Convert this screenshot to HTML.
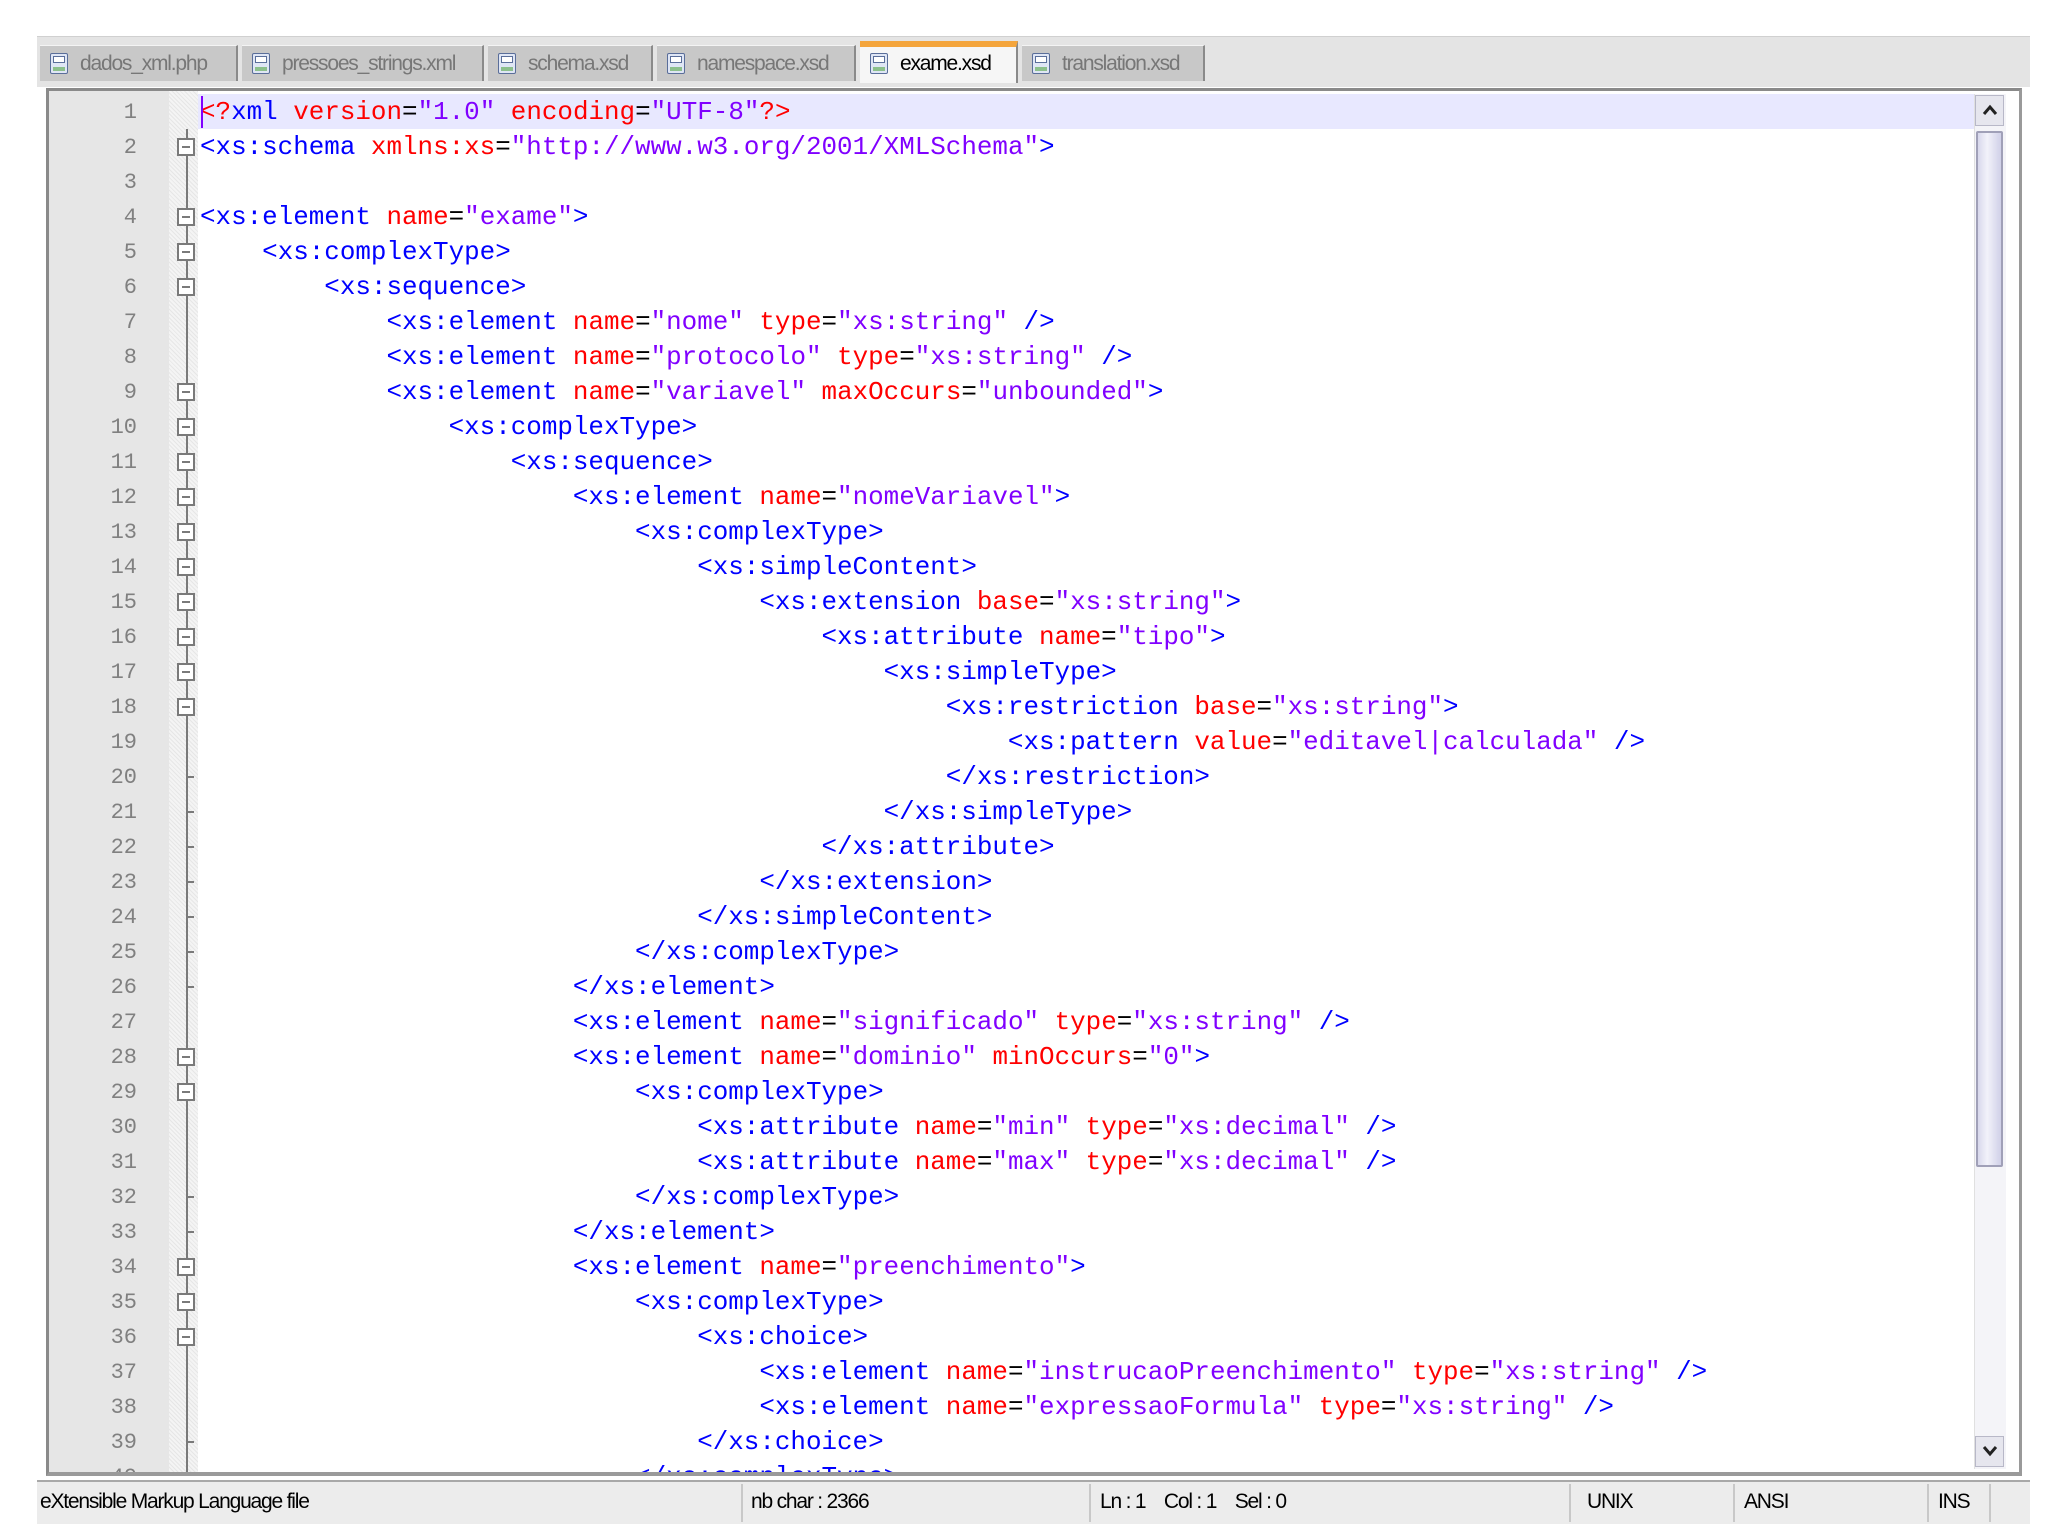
<!DOCTYPE html>
<html><head><meta charset="utf-8">
<style>
html,body{margin:0;padding:0;width:2048px;height:1535px;background:#fff;overflow:hidden;position:relative;font-family:"Liberation Sans",sans-serif}
.tabbar{position:absolute;left:37px;top:36px;width:1993px;height:50px;background:#e4e4e4;border-top:1px solid #d0d0d0}
.tab{position:absolute;top:8px;height:36px;background:#c8c8c8;border-right:2px solid #8a8a8a;border-top:1px solid #f4f4f4;font-size:21px;color:#777;letter-spacing:-1.2px;line-height:36px;white-space:nowrap;box-sizing:border-box;padding-left:40px}
.tab.act{background:#f6f6f6;color:#000;top:4px;height:42px;border-top:6px solid #f4a53c;line-height:34px}
.ico{position:absolute;left:10px;top:7px;width:18px;height:21px;border:1.5px solid #5a6e9a;border-radius:2px;background:#dfe6f5;box-sizing:border-box}
.ico:before{content:"";position:absolute;left:2px;right:2px;top:2px;height:5px;border:1px solid #5a6e9a;background:#fff}
.ico:after{content:"";position:absolute;left:2px;right:2px;bottom:2px;height:4px;background:#8cc08c}
.tab.act .ico{top:6px}
.frame{position:absolute;left:46px;top:88px;width:1976px;height:1388px;background:#fff;border-top:3px solid #8a8a8a;border-left:3px solid #8a8a8a;border-right:3px solid #9a9a9a;border-bottom:4px solid #9a9a9a;box-sizing:border-box;overflow:hidden}
.gut{position:absolute;left:0;top:0;width:120px;height:100%;background:#e6e6e6}
.fold{position:absolute;left:120px;top:0;width:29px;height:100%;background-color:#f4f4f4;background-image:repeating-linear-gradient(45deg,#e6e6e6 0 1px,transparent 1px 3px)}
.hl{position:absolute;left:149px;top:3px;width:1776px;height:35px;background:#e8e8ff}
.caret{position:absolute;left:152px;top:5px;width:2px;height:32px;background:#8000ff}
.nums{position:absolute;left:0;top:4px;width:88px;text-align:right;font-family:"Liberation Mono",monospace;font-size:22px;line-height:35px;color:#808080;white-space:pre;margin:0}
.code{position:absolute;left:151px;top:4px;font-family:"Liberation Mono",monospace;font-size:25.9px;line-height:35px;color:#000;white-space:pre;margin:0;letter-spacing:0}
.t{color:#0000ff}.a{color:#ff0000}.v{color:#8000ff}
.vl{position:absolute;left:137px;width:2px;background:#7a7a7a}
.fb{position:absolute;left:128px;width:18px;height:18px;border:2px solid #7a7a7a;background:#fff;box-sizing:border-box}
.fb:after{content:"";position:absolute;left:3px;right:3px;top:6px;height:2px;background:#7a7a7a}
.tk{position:absolute;left:137px;width:8px;height:2px;background:#7a7a7a}
.sb{position:absolute;left:1925px;top:3px;width:31px;height:1375px;background:#f4f4f8;border-left:1px solid #e0e0e0}
.sbbtn{position:absolute;left:1926px;width:29px;height:31px;background:#e6e6ee;border:1px solid #b8b8c8;box-sizing:border-box}
.sbbtn svg{position:absolute;left:6px;top:8px}
.thumb{position:absolute;left:1927px;top:40px;width:27px;height:1036px;background:linear-gradient(90deg,#d8d8ec,#f2f2fa 40%,#d0d0e8);border:2px solid #a0a0b8;box-sizing:border-box;border-radius:2px}
.status{position:absolute;left:37px;top:1480px;width:1993px;height:42px;background:#ececec;border-top:2px solid #a8a8a8;font-size:21px;letter-spacing:-1.2px;line-height:40px;color:#000}
.status span{position:absolute;top:0}
.sep{position:absolute;top:2px;width:2px;height:38px;background:#c8c8c8}
</style></head><body>
<div class="tabbar">
 <div class="tab" style="left:3px;width:198px"><span class="ico"></span>dados_xml.php</div>
 <div class="tab" style="left:205px;width:242px"><span class="ico"></span>pressoes_strings.xml</div>
 <div class="tab" style="left:451px;width:165px"><span class="ico"></span>schema.xsd</div>
 <div class="tab" style="left:620px;width:199px"><span class="ico"></span>namespace.xsd</div>
 <div class="tab act" style="left:823px;width:158px"><span class="ico"></span>exame.xsd</div>
 <div class="tab" style="left:985px;width:183px"><span class="ico"></span>translation.xsd</div>
</div>
<div class="frame">
 <div class="gut"></div>
 <div class="fold"></div>
 <div class="hl"></div>
 <pre class="nums">1
2
3
4
5
6
7
8
9
10
11
12
13
14
15
16
17
18
19
20
21
22
23
24
25
26
27
28
29
30
31
32
33
34
35
36
37
38
39
40</pre>
 <div class="vl" style="top:38px;height:1360px"></div>
 <div class="fb" style="top:47px"></div>
 <div class="fb" style="top:117px"></div>
 <div class="fb" style="top:152px"></div>
 <div class="fb" style="top:187px"></div>
 <div class="fb" style="top:292px"></div>
 <div class="fb" style="top:327px"></div>
 <div class="fb" style="top:362px"></div>
 <div class="fb" style="top:397px"></div>
 <div class="fb" style="top:432px"></div>
 <div class="fb" style="top:467px"></div>
 <div class="fb" style="top:502px"></div>
 <div class="fb" style="top:537px"></div>
 <div class="fb" style="top:572px"></div>
 <div class="fb" style="top:607px"></div>
 <div class="fb" style="top:957px"></div>
 <div class="fb" style="top:992px"></div>
 <div class="fb" style="top:1167px"></div>
 <div class="fb" style="top:1202px"></div>
 <div class="fb" style="top:1237px"></div>
 <div class="tk" style="top:685px"></div>
 <div class="tk" style="top:720px"></div>
 <div class="tk" style="top:755px"></div>
 <div class="tk" style="top:790px"></div>
 <div class="tk" style="top:825px"></div>
 <div class="tk" style="top:860px"></div>
 <div class="tk" style="top:895px"></div>
 <div class="tk" style="top:1105px"></div>
 <div class="tk" style="top:1140px"></div>
 <div class="tk" style="top:1350px"></div>
 <pre class="code"><span class="a">&lt;?</span><span class="t">xml</span> <span class="a">version</span>=<span class="v">"1.0"</span> <span class="a">encoding</span>=<span class="v">"UTF-8"</span><span class="a">?&gt;</span>
<span class="t">&lt;xs:schema</span> <span class="a">xmlns:xs</span>=<span class="v">"http://www.w3.org/2001/XMLSchema"</span><span class="t">&gt;</span>

<span class="t">&lt;xs:element</span> <span class="a">name</span>=<span class="v">"exame"</span><span class="t">&gt;</span>
    <span class="t">&lt;xs:complexType&gt;</span>
        <span class="t">&lt;xs:sequence&gt;</span>
            <span class="t">&lt;xs:element</span> <span class="a">name</span>=<span class="v">"nome"</span> <span class="a">type</span>=<span class="v">"xs:string"</span> <span class="t">/&gt;</span>
            <span class="t">&lt;xs:element</span> <span class="a">name</span>=<span class="v">"protocolo"</span> <span class="a">type</span>=<span class="v">"xs:string"</span> <span class="t">/&gt;</span>
            <span class="t">&lt;xs:element</span> <span class="a">name</span>=<span class="v">"variavel"</span> <span class="a">maxOccurs</span>=<span class="v">"unbounded"</span><span class="t">&gt;</span>
                <span class="t">&lt;xs:complexType&gt;</span>
                    <span class="t">&lt;xs:sequence&gt;</span>
                        <span class="t">&lt;xs:element</span> <span class="a">name</span>=<span class="v">"nomeVariavel"</span><span class="t">&gt;</span>
                            <span class="t">&lt;xs:complexType&gt;</span>
                                <span class="t">&lt;xs:simpleContent&gt;</span>
                                    <span class="t">&lt;xs:extension</span> <span class="a">base</span>=<span class="v">"xs:string"</span><span class="t">&gt;</span>
                                        <span class="t">&lt;xs:attribute</span> <span class="a">name</span>=<span class="v">"tipo"</span><span class="t">&gt;</span>
                                            <span class="t">&lt;xs:simpleType&gt;</span>
                                                <span class="t">&lt;xs:restriction</span> <span class="a">base</span>=<span class="v">"xs:string"</span><span class="t">&gt;</span>
                                                    <span class="t">&lt;xs:pattern</span> <span class="a">value</span>=<span class="v">"editavel|calculada"</span> <span class="t">/&gt;</span>
                                                <span class="t">&lt;/xs:restriction&gt;</span>
                                            <span class="t">&lt;/xs:simpleType&gt;</span>
                                        <span class="t">&lt;/xs:attribute&gt;</span>
                                    <span class="t">&lt;/xs:extension&gt;</span>
                                <span class="t">&lt;/xs:simpleContent&gt;</span>
                            <span class="t">&lt;/xs:complexType&gt;</span>
                        <span class="t">&lt;/xs:element&gt;</span>
                        <span class="t">&lt;xs:element</span> <span class="a">name</span>=<span class="v">"significado"</span> <span class="a">type</span>=<span class="v">"xs:string"</span> <span class="t">/&gt;</span>
                        <span class="t">&lt;xs:element</span> <span class="a">name</span>=<span class="v">"dominio"</span> <span class="a">minOccurs</span>=<span class="v">"0"</span><span class="t">&gt;</span>
                            <span class="t">&lt;xs:complexType&gt;</span>
                                <span class="t">&lt;xs:attribute</span> <span class="a">name</span>=<span class="v">"min"</span> <span class="a">type</span>=<span class="v">"xs:decimal"</span> <span class="t">/&gt;</span>
                                <span class="t">&lt;xs:attribute</span> <span class="a">name</span>=<span class="v">"max"</span> <span class="a">type</span>=<span class="v">"xs:decimal"</span> <span class="t">/&gt;</span>
                            <span class="t">&lt;/xs:complexType&gt;</span>
                        <span class="t">&lt;/xs:element&gt;</span>
                        <span class="t">&lt;xs:element</span> <span class="a">name</span>=<span class="v">"preenchimento"</span><span class="t">&gt;</span>
                            <span class="t">&lt;xs:complexType&gt;</span>
                                <span class="t">&lt;xs:choice&gt;</span>
                                    <span class="t">&lt;xs:element</span> <span class="a">name</span>=<span class="v">"instrucaoPreenchimento"</span> <span class="a">type</span>=<span class="v">"xs:string"</span> <span class="t">/&gt;</span>
                                    <span class="t">&lt;xs:element</span> <span class="a">name</span>=<span class="v">"expressaoFormula"</span> <span class="a">type</span>=<span class="v">"xs:string"</span> <span class="t">/&gt;</span>
                                <span class="t">&lt;/xs:choice&gt;</span>
                            <span class="t">&lt;/xs:complexType&gt;</span></pre>
 <div class="caret"></div>
 <div class="sb"></div>
 <div class="sbbtn" style="top:4px"><svg width="16" height="12" viewBox="0 0 16 12"><path d="M2 10 L8 3 L14 10" fill="none" stroke="#222" stroke-width="3"/></svg></div>
 <div class="thumb"></div>
 <div class="sbbtn" style="top:1345px"><svg width="16" height="12" viewBox="0 0 16 12"><path d="M2 2 L8 9 L14 2" fill="none" stroke="#222" stroke-width="3"/></svg></div>
</div>
<div class="status">
 <span style="left:3px">eXtensible Markup Language file</span>
 <div class="sep" style="left:704px"></div>
 <span style="left:714px">nb char : 2366</span>
 <div class="sep" style="left:1052px"></div>
 <span style="left:1063px">Ln : 1 &nbsp;&nbsp; Col : 1 &nbsp;&nbsp; Sel : 0</span>
 <div class="sep" style="left:1532px"></div>
 <span style="left:1550px">UNIX</span>
 <div class="sep" style="left:1696px"></div>
 <span style="left:1707px">ANSI</span>
 <div class="sep" style="left:1890px"></div>
 <span style="left:1901px">INS</span>
 <div class="sep" style="left:1952px"></div>
</div>
</body></html>
